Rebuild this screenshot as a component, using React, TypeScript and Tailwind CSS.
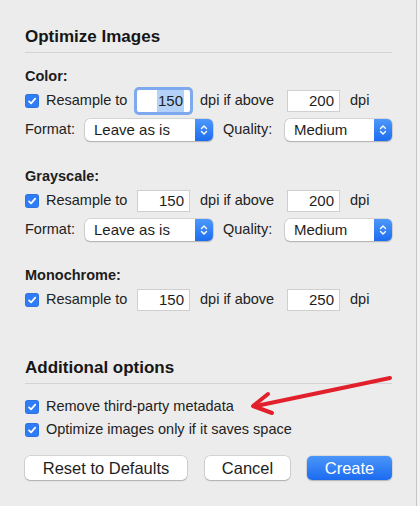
import React from 'react';

const FONT = { fontFamily: '"Liberation Sans", Arial, sans-serif' };

function Check() {
  return (
    <span className="w-[14px] h-[14px] rounded-[3px] bg-[#2f7df6] flex items-center justify-center shrink-0 shadow-[inset_0_0_0_0.5px_rgba(0,0,0,0.15)]">
      <svg width="10" height="10" viewBox="0 0 10 10">
        <path d="M2 5.3 L4.1 7.4 L8.2 2.6" fill="none" stroke="#fff" strokeWidth="1.7" strokeLinecap="round" strokeLinejoin="round" />
      </svg>
    </span>
  );
}

function NumInput({ value, focused }: { value: string; focused?: boolean }) {
  return (
    <div
      className={`w-[53px] h-[22px] bg-white flex items-center justify-end pr-[6px] text-[15px] text-[#1e1e1e] ${
        focused
          ? 'rounded-[2px] shadow-[0_0_0_3px_#7ea9ee]'
          : 'shadow-[inset_0_0_0_1px_#cfcfcf]'
      }`}
    >
      {focused ? <span className="bg-[#b4d2f7] px-[1px]">{value}</span> : value}
    </div>
  );
}

function Select({ value, width }: { value: string; width: string }) {
  return (
    <div
      className={`${width} h-[22px] bg-white rounded-[5px] flex items-center shadow-[0_0_0_0.5px_rgba(0,0,0,0.2),0_1px_1.5px_rgba(0,0,0,0.18)]`}
    >
      <span className="flex-1 pl-[9px] text-[15px] text-[#1e1e1e]">{value}</span>
      <span className="w-[18px] h-full rounded-r-[5px] bg-gradient-to-b from-[#4d98f9] to-[#1c6cf0] flex items-center justify-center">
        <svg width="8" height="12" viewBox="0 0 8 12">
          <path d="M1.5 4.5 L4 2 L6.5 4.5 M1.5 7.5 L4 10 L6.5 7.5" fill="none" stroke="#fff" strokeWidth="1.4" strokeLinecap="round" strokeLinejoin="round" />
        </svg>
      </span>
    </div>
  );
}

function ResampleRow({ dpi, above, focused }: { dpi: string; above: string; focused?: boolean }) {
  return (
    <div className="h-[24px] flex items-center text-[14.5px] text-[#222]">
      <div className="w-[112px] flex items-center">
        <Check />
        <span className="ml-[7px]">Resample to</span>
      </div>
      <NumInput value={dpi} focused={focused} />
      <span className="w-[97px] pl-[10px]">dpi if above</span>
      <NumInput value={above} />
      <span className="ml-[10px]">dpi</span>
    </div>
  );
}

function FormatRow() {
  return (
    <div className="h-[24px] flex items-center text-[14.5px] text-[#222]">
      <span className="w-[60px]">Format:</span>
      <Select value="Leave as is" width="w-[128px]" />
      <span className="w-[72px] pl-[10px]">Quality:</span>
      <Select value="Medium" width="w-[107px]" />
    </div>
  );
}

export default function App() {
  return (
    <div className="w-[420px] h-[506px] bg-[#f3f3f3] overflow-hidden" style={FONT}>
      <div className="relative w-[417px] h-[506px] bg-[#ececec] border-r border-[#c4c4c4] pl-[25px] pr-[24px] pt-[27px]">
        <h1 className="text-[17px] leading-[20px] font-bold text-[#161616] pb-[5px] border-b border-[#d3d3d3]">
          Optimize Images
        </h1>

        <div className="mt-[14px] text-[14.5px] leading-[18px] font-bold text-[#1c1c1c]">Color:</div>
        <div className="mt-[4px]">
          <ResampleRow dpi="150" above="200" focused />
        </div>
        <div className="mt-[5px]">
          <FormatRow />
        </div>

        <div className="mt-[25px] text-[14.5px] leading-[18px] font-bold text-[#1c1c1c]">Grayscale:</div>
        <div className="mt-[4px]">
          <ResampleRow dpi="150" above="200" />
        </div>
        <div className="mt-[5px]">
          <FormatRow />
        </div>

        <div className="mt-[24px] text-[14.5px] leading-[18px] font-bold text-[#1c1c1c]">Monochrome:</div>
        <div className="mt-[4px]">
          <ResampleRow dpi="150" above="250" />
        </div>

        <h2 className="mt-[46px] text-[17px] leading-[20px] font-bold text-[#161616] pb-[5px] border-b border-[#d3d3d3]">
          Additional options
        </h2>
        <div className="mt-[12px] h-[22px] flex items-center text-[14.5px] text-[#222]">
          <Check />
          <span className="ml-[7px]">Remove third-party metadata</span>
        </div>
        <div className="mt-[1px] h-[22px] flex items-center text-[14.5px] text-[#222]">
          <Check />
          <span className="ml-[7px]">Optimize images only if it saves space</span>
        </div>

        <div className="mt-[15px] flex items-center text-[16.5px]">
          <button className="w-[162px] h-[24px] bg-white rounded-[5px] text-[#1e1e1e] shadow-[0_0_0_0.5px_rgba(0,0,0,0.2),0_1px_1.5px_rgba(0,0,0,0.18)]">
            Reset to Defaults
          </button>
          <button className="ml-[18px] w-[85px] h-[24px] bg-white rounded-[5px] text-[#1e1e1e] shadow-[0_0_0_0.5px_rgba(0,0,0,0.2),0_1px_1.5px_rgba(0,0,0,0.18)]">
            Cancel
          </button>
          <button className="ml-[17px] w-[85px] h-[24px] rounded-[5px] text-white bg-gradient-to-b from-[#4a95f9] to-[#1b6bf0] shadow-[0_0_0_0.5px_rgba(0,0,0,0.15),0_1px_1.5px_rgba(0,0,0,0.18)]">
            Create
          </button>
        </div>

        <svg className="absolute left-0 top-0 pointer-events-none" width="417" height="506" viewBox="0 0 417 506">
          <path d="M390 378 L256 406" fill="none" stroke="#e2202b" strokeWidth="4" strokeLinecap="round" />
          <path d="M268 394 L253 406 L272 413" fill="none" stroke="#e2202b" strokeWidth="4" strokeLinecap="round" strokeLinejoin="round" />
        </svg>
      </div>
    </div>
  );
}
